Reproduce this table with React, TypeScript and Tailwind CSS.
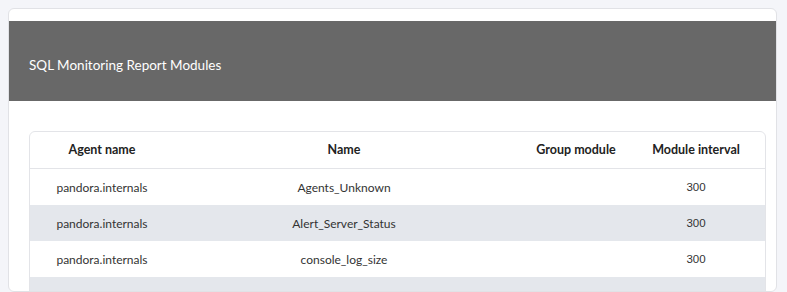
const rows = [
  { agent: "pandora.internals", name: "Agents_Unknown", group: "", interval: "300" },
  { agent: "pandora.internals", name: "Alert_Server_Status", group: "", interval: "300" },
  { agent: "pandora.internals", name: "console_log_size", group: "", interval: "300" },
  { agent: "pandorafms.host", name: "CPU IOWait", group: "System", interval: "300" },
];

const cols = "grid grid-cols-[144px_340px_124px_116px]";

export default function App() {
  return (
    <div className="min-h-screen bg-[#f4f5f9] pl-2 pt-2 pr-[10px] font-['Lato','Noto_Sans',sans-serif]">
      <div className="h-[284px] overflow-hidden rounded-md border border-[#e1e2e6] bg-white pt-3">
        <div className="flex h-20 items-center bg-[#686868] px-5 pt-2">
          <h1 className="text-[13.5px] text-white">SQL Monitoring Report Modules</h1>
        </div>

        <div className="ml-5 mr-[10px] mt-[30px] rounded-md border border-[#e3e4e8]">
          <div className={`${cols} h-[37px] items-center border-b border-[#e3e4e8] pt-px text-[12.5px] font-bold text-[#222]`}>
            <div className="text-center">Agent name</div>
            <div className="text-center">Name</div>
            <div className="text-center">Group module</div>
            <div className="text-center">Module interval</div>
          </div>
          {rows.map((r, i) => (
            <div
              key={i}
              className={`${cols} h-9 items-center pt-px text-[12px] text-[#333] ${i % 2 ? "bg-[#e4e7ec]" : "bg-white"}`}
            >
              <div className="text-center">{r.agent}</div>
              <div className="text-center">{r.name}</div>
              <div className="text-center">{r.group}</div>
              <div className="text-center font-['Liberation_Sans',sans-serif] text-[11.5px]">{r.interval}</div>
            </div>
          ))}
        </div>
      </div>
    </div>
  );
}
